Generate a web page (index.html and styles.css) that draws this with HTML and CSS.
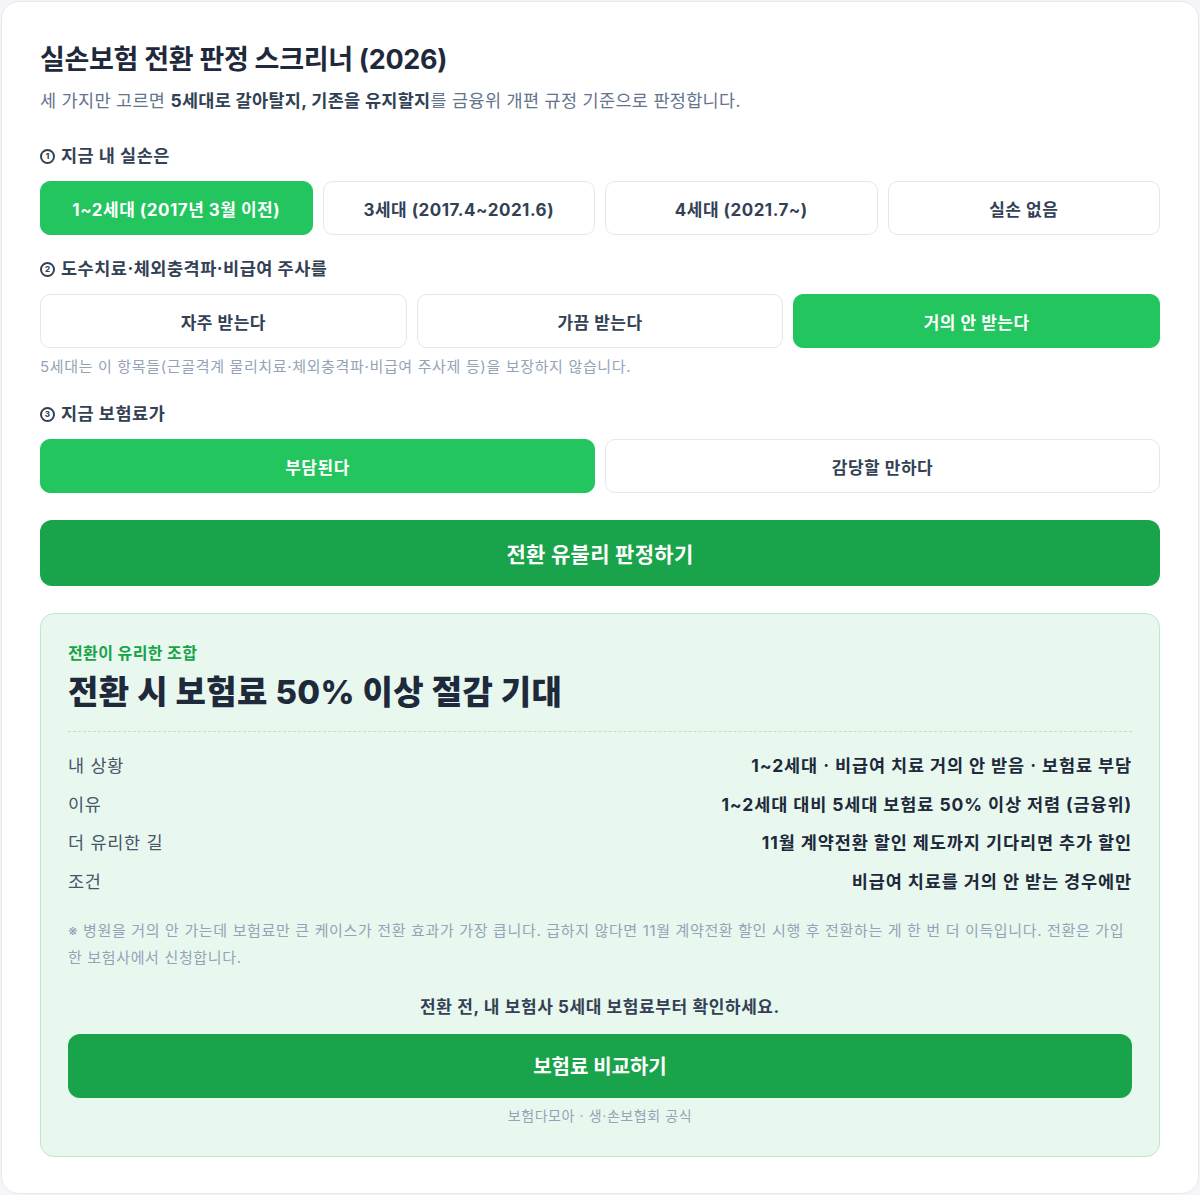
FILE: index.html
```html
<!DOCTYPE html>
<html lang="ko">
<head>
  <meta charset="UTF-8" />
  <meta name="viewport" content="width=device-width, initial-scale=1.0"/>
  <title>실손보험 전환 판정 스크리너 (2026)</title>
  <link rel="stylesheet" href="styles.css">
</head>
<body>
  <div class="card">
    <h1>실손보험 전환 판정 스크리너 (2026)</h1>
    <p class="subtext">세 가지만 고르면 <strong>5세대로 갈아탈지, 기존을 유지할지</strong>를 금융위 개편 규정 기준으로 판정합니다.</p>

    <div class="question">
      <p class="q-label"><span class="num">1</span>지금 내 실손은</p>
      <div class="options four">
        <button class="opt active">1~2세대 (2017년 3월 이전)</button>
        <button class="opt">3세대 (2017.4~2021.6)</button>
        <button class="opt">4세대 (2021.7~)</button>
        <button class="opt">실손 없음</button>
      </div>
    </div>

    <div class="question">
      <p class="q-label"><span class="num">2</span>도수치료·체외충격파·비급여 주사를</p>
      <div class="options three">
        <button class="opt">자주 받는다</button>
        <button class="opt">가끔 받는다</button>
        <button class="opt active">거의 안 받는다</button>
      </div>
      <p class="hint">5세대는 이 항목들(근골격계 물리치료·체외충격파·비급여 주사제 등)을 보장하지 않습니다.</p>
    </div>

    <div class="question">
      <p class="q-label"><span class="num">3</span>지금 보험료가</p>
      <div class="options two">
        <button class="opt active">부담된다</button>
        <button class="opt">감당할 만하다</button>
      </div>
    </div>

    <button class="main-btn">전환 유불리 판정하기</button>

    <div class="result">
      <p class="tag">전환이 유리한 조합</p>
      <h2>전환 시 보험료 50% 이상 절감 기대</h2>

      <div class="rows">
        <div class="row"><span>내 상황</span><strong>1~2세대 · 비급여 치료 거의 안 받음 · 보험료 부담</strong></div>
        <div class="row"><span>이유</span><strong>1~2세대 대비 5세대 보험료 50% 이상 저렴 (금융위)</strong></div>
        <div class="row"><span>더 유리한 길</span><strong>11월 계약전환 할인 제도까지 기다리면 추가 할인</strong></div>
        <div class="row"><span>조건</span><strong>비급여 치료를 거의 안 받는 경우에만</strong></div>
      </div>

      <p class="note">※ 병원을 거의 안 가는데 보험료만 큰 케이스가 전환 효과가 가장 큽니다. 급하지 않다면 11월 계약전환 할인 시행 후 전환하는 게 한 번 더 이득입니다. 전환은 가입한 보험사에서 신청합니다.</p>

      <p class="cta-text">전환 전, 내 보험사 5세대 보험료부터 확인하세요.</p>
      <button class="cta-btn">보험료 비교하기</button>
      <p class="source">보험다모아 · 생·손보협회 공식</p>
    </div>
  </div>
</body>
</html>
```

FILE: styles.css
```css
body {
  margin: 0;
  font-family: Inter, "Noto Sans CJK KR", sans-serif;
  background-color: #f3f5f8;
  color: #1e293b;
}

.card {
  margin: 1px;
  background: #ffffff;
  border: 1px solid #e6eaef;
  border-radius: 18px;
  padding: 38px 38px 36px;
}

h1 {
  margin: 0;
  font-size: 27px;
  line-height: 40px;
  font-weight: 700;
  letter-spacing: -0.3px;
}

.subtext {
  margin: 8px 0 30px;
  font-size: 17.5px;
  line-height: 26px;
  letter-spacing: 0.3px;
  color: #64748b;
}

.subtext strong {
  color: #334155;
  font-weight: 700;
}

.question {
  margin-bottom: 22px;
}

.q-label {
  display: flex;
  align-items: center;
  margin: 0 0 13px;
  font-size: 17.5px;
  line-height: 24px;
  font-weight: 700;
  letter-spacing: 0.5px;
  color: #334155;
}

.num {
  display: inline-flex;
  align-items: center;
  justify-content: center;
  width: 11px;
  height: 11px;
  margin-right: 6px;
  border: 2px solid #334155;
  border-radius: 50%;
  font-size: 8px;
  line-height: 1;
  font-weight: 800;
  letter-spacing: 0;
}

.options {
  display: grid;
  gap: 10px;
}

.options.four { grid-template-columns: repeat(4, 1fr); }
.options.three { grid-template-columns: repeat(3, 1fr); }
.options.two { grid-template-columns: repeat(2, 1fr); }

.opt {
  height: 54px;
  font-family: inherit;
  font-size: 17px;
  font-weight: 700;
  letter-spacing: 0.5px;
  color: #334155;
  background: #ffffff;
  border: 1px solid #e2e8f0;
  border-radius: 10px;
  cursor: pointer;
}

.opt.active {
  background: #22c55e;
  border-color: #22c55e;
  color: #ffffff;
}

.hint {
  margin: 8px 0 24px;
  font-size: 15px;
  line-height: 22px;
  letter-spacing: 0.65px;
  color: #94a3b8;
}

.main-btn {
  display: block;
  width: 100%;
  height: 66px;
  margin: 27px 0;
  font-family: inherit;
  font-size: 21px;
  font-weight: 700;
  letter-spacing: 0.3px;
  color: #ffffff;
  background: #19a34a;
  border: none;
  border-radius: 12px;
  cursor: pointer;
}

.result {
  background: #e8f8ee;
  border: 1px solid #b9ebca;
  border-radius: 14px;
  padding: 28px 27px 30px;
}

.tag {
  margin: 0;
  font-size: 16px;
  line-height: 22px;
  font-weight: 700;
  letter-spacing: 0.4px;
  color: #16a34a;
}

h2 {
  margin: 7px 0 0;
  font-size: 33px;
  line-height: 42px;
  font-weight: 800;
  letter-spacing: 0.4px;
}

.rows {
  margin-top: 18px;
  border-top: 1px dashed #c5dccc;
  padding-top: 15px;
}

.row {
  display: flex;
  justify-content: space-between;
  padding: 7px 0;
  font-size: 17.5px;
  line-height: 24.7px;
  letter-spacing: 0.7px;
}

.row span {
  color: #475569;
}

.row strong {
  font-weight: 700;
  letter-spacing: 0.9px;
  color: #1e293b;
}

.note {
  margin: 15px 0 0;
  font-size: 15px;
  line-height: 27px;
  letter-spacing: 0.65px;
  color: #94a3b8;
}

.cta-text {
  margin: 24px 0 15px;
  text-align: center;
  font-size: 17px;
  line-height: 24px;
  font-weight: 700;
  letter-spacing: 0.6px;
  color: #334155;
}

.cta-btn {
  display: block;
  width: 100%;
  height: 64px;
  font-family: inherit;
  font-size: 20px;
  font-weight: 700;
  color: #ffffff;
  background: #19a34a;
  border: none;
  border-radius: 12px;
  cursor: pointer;
}

.source {
  margin: 8px 0 0;
  text-align: center;
  font-size: 14px;
  line-height: 20px;
  letter-spacing: 0.6px;
  color: #94a3b8;
}
```
